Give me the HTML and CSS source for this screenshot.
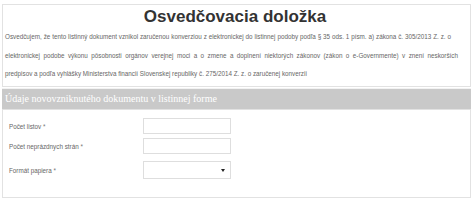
FILE: index.html
```html
<!DOCTYPE html>
<html lang="sk">
<head>
    <meta charset="UTF-8">
    <meta name="viewport" content="width=device-width, initial-scale=1.0">
    <title>Osvedčovacia doložka</title>
    <link rel="stylesheet" href="styles.css">
</head>
<body>

    <div class="page">
        <div class="card intro">
            <h1 class="title">Osvedčovacia doložka</h1>
            <p class="text">
                <span class="line full">Osvedčujem, že tento listinný dokument vznikol zaručenou konverziou z elektronickej do listinnej podoby podľa § 35 ods. 1 písm. a) zákona č. 305/2013 Z. z. o</span>
                <span class="line full wide">elektronickej podobe výkonu pôsobnosti orgánov verejnej moci a o zmene a doplnení niektorých zákonov (zákon o e-Governmente) v znení neskorších</span>
                <span class="line">predpisov a podľa vyhlášky Ministerstva financií Slovenskej republiky č. 275/2014 Z. z. o zaručenej konverzii</span>
            </p>
        </div>

        <div class="section-head">Údaje novovzniknutého dokumentu v listinnej forme</div>

        <div class="card form">
            <div class="row">
                <label class="label" for="listy">Počet listov <span class="req">*</span></label>
                <input class="field" id="listy" type="text">
            </div>
            <div class="row">
                <label class="label" for="strany">Počet neprázdnych strán <span class="req">*</span></label>
                <input class="field" id="strany" type="text">
            </div>
            <div class="row row-select">
                <label class="label" for="format">Formát papiera <span class="req">*</span></label>
                <span class="select-wrap">
                    <select class="field select" id="format">
                        <option></option>
                        <option>A4</option>
                        <option>A3</option>
                    </select>
                </span>
            </div>
        </div>
    </div>

</body>
</html>
```

FILE: styles.css
```css
body {
    font-family: 'Liberation Sans', Arial, Helvetica, sans-serif;
    background-color: #ffffff;
    color: #555;
    margin: 0;
}

.page {
    padding: 4px 3px 0 2px;
}

.card {
    background-color: #fff;
    border: 1px solid #e2e2e2;
}

.intro {
    padding: 2px 2px 2px 2px;
}

.title {
    margin: 0 0 0 -3px;
    font-size: 17px;
    line-height: 20px;
    font-weight: bold;
    color: #333;
    text-align: center;
}

.text {
    margin: 1px 0 0 0;
    font-size: 6.3px;
    line-height: 18.5px;
    color: #666;
}

.line {
    display: block;
    white-space: nowrap;
}

.line.full {
    text-align: justify;
    text-align-last: justify;
    width: 446px;
}

.line.wide {
    width: 453px;
}

.section-head {
    background-color: #c9c9c9;
    color: #fff;
    font-family: 'Liberation Serif', 'Times New Roman', serif;
    font-size: 10px;
    line-height: 20px;
    height: 20px;
    padding-left: 3px;
    margin-top: 1px;
    border-top: 1px solid #f2f2f2;
}

.form {
    padding: 8px 0 18px 6px;
    display: flex;
    flex-direction: column;
    gap: 4px;
}

.row {
    display: flex;
    align-items: center;
}

.row-select {
    margin-top: 3px;
}

.label {
    width: 134px;
    font-size: 6.3px;
    color: #666;
    padding-top: 2px;
}

.req {
    color: #777;
}

.field {
    box-sizing: border-box;
    width: 88px;
    height: 16px;
    border: 1px solid #dedede;
    border-radius: 0;
    background-color: #fff;
    margin: 0;
    padding: 0 3px;
    outline: none;
}

.select-wrap {
    position: relative;
    display: block;
}

.select {
    appearance: none;
    -webkit-appearance: none;
    height: 18px;
}

.select-wrap::after {
    content: '';
    position: absolute;
    right: 6px;
    top: 8px;
    border-left: 2px solid transparent;
    border-right: 2px solid transparent;
    border-top: 3px solid #222;
}
```
